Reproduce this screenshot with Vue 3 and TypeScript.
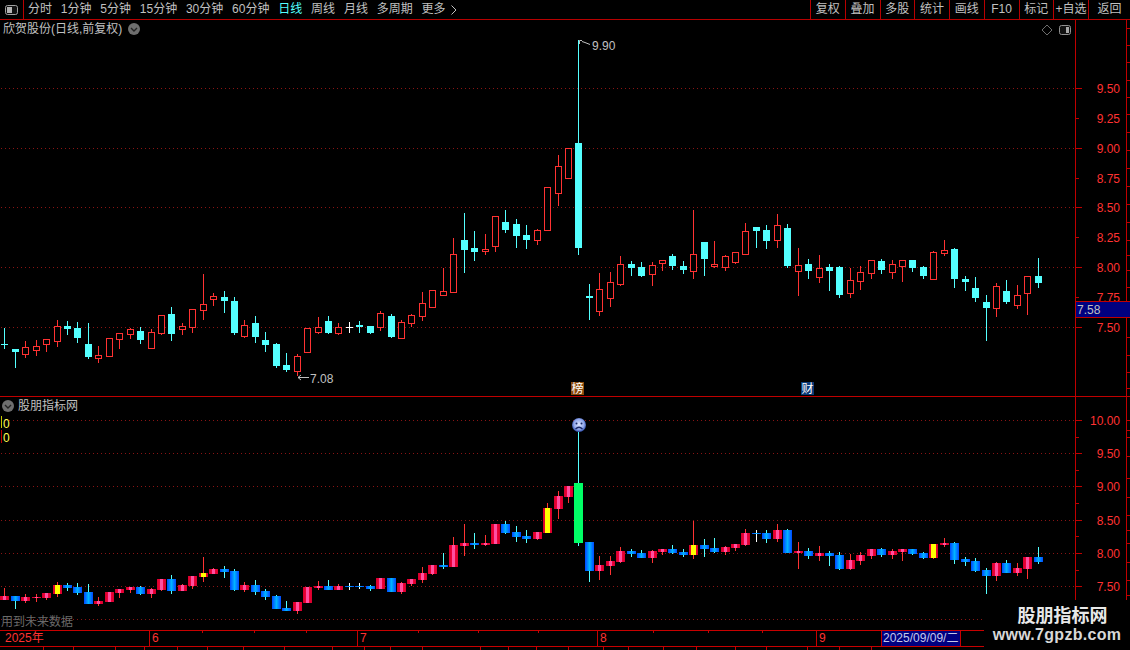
<script setup lang="ts">
interface Candle { k: string; hi: number; top: number; bot: number; lo: number; x: number }

const leftTools = ['分时', '1分钟', '5分钟', '15分钟', '30分钟', '60分钟', '日线', '周线', '月线', '多周期', '更多']
const rightTools = ['复权', '叠加', '多股', '统计', '画线', 'F10', '标记', '+自选', '返回']

const xOf = (i: number) => 4 + Math.ceil(i * 10.4375 - 0.1)

// rows are measured from zoomed crops: value = (pixel - base) * 3
const seg = (base: number, rows: string) =>
  rows.split(';').map((r) => {
    const [k, a, b, c, d] = r.trim().split(' ')
    const y = (v: string) => Math.round(base + Number(v) / 3)
    return { k, hi: y(a), top: y(b), bot: y(c), lo: y(d) }
  })

const build = (parts: ReturnType<typeof seg>[]): Candle[] =>
  parts.flat().map((c, i) => ({ ...c, x: xOf(i) }))

const mainCandles = build([
  seg(260, 'c 203 252 255 267;c 267 267 276 324;r 243 262 281 294;r 240 259 269 288;r 238 238 251 276;r 180 199 242 261;c 183 198 207 225;c 186 204 234 249;c 189 252 291 297;r 258 286 293 309;r 235 235 287 287;r 219 220 236 267;r 204 208 221 237;c 201 213 240 252;r 208 217 263 267;r 166 166 218 225;c 141 162 222 243;r 189 199 206 225;r 148 148 201 219;r 42 133 149 180;r 99 109 116 138;c 93 111 123 159;c 111 123 219 225;r 180 196 227 234;c 168 189 231 249;c 216 240 255 276;c 249 252 318 324;c 279 315 330 336;r 282 289 332 348;r 205 205 275 279;r 171 202 215 222'),
  seg(200, 'c 348 363 399 402;r 370 381 399 405;w 366 381 384 399;c 363 375 381 399;c 378 378 399 402;r 334 339 381 393;c 342 348 411 414;r 360 366 414 417;r 342 346 368 381;r 276 310 347 362;r 270 270 320 324;r 205 274 285 288;r 114 162 276 276;c 39 120 150 219;c 93 144 156 183;r 102 147 153 165;r 48 48 138 156;c 30 66 90 99;c 57 72 108 144;c 75 105 120 147;r 87 90 120 135;r -39 -39 90 90;r -135 -102 -21 18;r -156 -156 -66 -66;c -480 -171 144 165;c 252 288 294 360;r 219 267 332 348;r 216 247 293 321;r 168 192 252 258;c 183 192 204 228;c 186 201 228 231'),
  seg(200, 'r 186 195 221 258;r 180 181 188 213;c 162 168 198 210;c 183 198 210 222;r 30 162 213 237;c 126 126 177 228;r 123 192 198 204;r 165 168 201 213;r 156 156 186 192;r 69 93 162 165;c 81 81 93 144;c 75 90 123 147;r 42 75 120 144;c 72 84 198 204;r 144 195 213 288;c 177 192 213 237;r 165 204 231 249;c 192 201 213 273;c 198 201 285 294;r 204 240 279 294;r 198 216 243 270;r 180 180 219 237;c 177 183 210 222;r 180 192 216 237;r 180 180 198 246;c 180 180 204 216;c 198 201 228 237;r 153 156 237 237;r 120 150 159 168;c 144 147 237 264'),
  seg(220, 'c 168 177 186 213;c 171 204 234 246;c 225 246 264 363;r 189 198 265 291;c 180 213 246 252;r 195 226 254 267;r 168 168 218 285;c 114 168 189 204'),
])

const subCandles = build([
  seg(390, 'r 594 618 630 630;b 618 618 633 657;r 612 621 633 639;r 612 621 623 636;r 609 609 624 630;y 576 585 612 621;b 579 585 594 603;b 579 591 609 615;b 582 606 642 642;r 621 633 642 648;r 606 606 636 636;r 597 597 609 624;r 591 591 600 609;b 588 591 612 615;r 594 597 612 624;r 567 567 600 603;b 555 567 603 612;r 582 585 603 603;r 558 558 588 597;y 501 549 561 576;r 534 537 552 552;b 528 537 546 564;b 537 543 600 603;r 576 585 600 606;b 570 585 606 615;b 597 603 621 630;b 615 618 657 657;b 633 654 663 663;r 636 636 663 672;r 591 591 639 639;r 573 588 594 600'),
  seg(400, 'b 540 558 570 570;r 552 558 570 570;w 549 558 561 570;w 549 558 561 567;b 555 558 567 573;r 534 534 567 567;b 534 534 576 576;r 546 549 576 582;r 537 537 552 558;r 501 519 540 549;r 495 495 522 525;b 459 495 501 507;r 411 435 501 501;r 372 429 438 468;b 399 429 435 447;r 405 429 435 438;r 372 372 432 432;b 363 372 399 402;b 378 396 411 426;b 390 408 417 429;r 396 396 417 420;y 309 324 399 399;r 273 288 327 357;r 258 258 291 309;g 96 249 429 438;b 426 426 513 546;r 468 495 513 540;r 468 483 498 525;r 441 453 486 489;b 447 453 462 471'),
  seg(490, 'b 180 189 204 204;r 180 183 204 219;r 177 177 186 195;b 165 177 189 192;b 177 186 195 201;y 93 165 195 207;b 147 165 177 201;b 144 174 186 189;r 168 171 186 195;r 162 162 174 183;r 117 129 165 168;w 120 129 132 156;b 120 129 147 159;r 102 120 147 156;b 117 120 189 189;r 156 183 189 237;b 174 183 198 207;r 168 189 198 213;b 183 189 198 228;b 186 195 237 240;r 192 210 237 240;r 186 195 213 225;r 177 177 198 207;b 174 177 195 201;r 177 183 195 207;r 177 177 186 213;b 177 177 192 195;b 186 189 204 207;y 162 162 204 207;r 144 159 165 171;b 156 159 210 222'),
  seg(400, 'b 471 477 486 498;b 474 483 513 516;b 504 510 528 582;r 486 489 528 543;b 480 489 519 519;r 489 504 519 528;r 471 471 507 537;b 441 471 486 492'),
])

const mainGrid = [88, 148, 207, 267, 327]
const subGrid = [420, 453, 486, 520, 553, 586, 619]
const mainLabels = [
  ['9.50', 88], ['9.25', 118], ['9.00', 148], ['8.75', 178], ['8.50', 207],
  ['8.25', 237], ['8.00', 267], ['7.75', 297], ['7.50', 327],
] as const
const subLabels = [
  ['10.00', 420], ['9.50', 453], ['9.00', 486], ['8.50', 520], ['8.00', 553], ['7.50', 586],
] as const
const subMinor = [437, 470, 503, 536, 570, 603]
const farTicksMain = [28, 45, 62, 80, 97, 114, 132, 150, 168, 186, 204, 222, 240, 255, 270, 287, 337, 355, 372, 388]
const farTicksSub = [420, 430, 437, 456, 478, 497, 515, 530, 543, 562, 580, 595]

const dateCells = [
  { w: 150, t: '2025年' }, { w: 208, t: '6' }, { w: 240, t: '7' }, { w: 219, t: '8' }, { w: 65, t: '9' },
]
const dateTicks = [202, 254, 306, 418, 478, 538, 653, 708, 762]

const tabEdges = [43, 73, 115, 144, 177, 207, 243, 284, 332, 364, 390, 422, 480, 508, 536, 568, 603, 628, 663, 696, 735, 766, 807, 839, 871]
const tabWidths = tabEdges.map((e, i) => e - (i ? tabEdges[i - 1] : -1))
</script>

<template>
  <div class="screen">
    <header class="toolbar">
      <div class="panel-btn">
        <svg width="13" height="10" viewBox="0 0 13 10">
          <rect x="0.5" y="0.5" width="12" height="9" rx="2" fill="#111" stroke="#a0a0a0" />
          <rect x="2" y="2" width="5" height="6" fill="#b4b4b4" />
        </svg>
      </div>
      <nav class="left-tools">
        <span v-for="t in leftTools" :key="t" class="tool" :class="{ active: t === '日线' }">{{ t }}</span>
        <svg class="more-arrow" width="6" height="10" viewBox="0 0 6 10">
          <path d="M0.5 0.5 L5 5 L0.5 9.5" fill="none" stroke="#c0c0c0" />
        </svg>
      </nav>
      <nav class="right-tools">
        <span v-for="t in rightTools" :key="t" class="rtool">{{ t }}</span>
      </nav>
    </header>

    <section class="pane pane-main">
      <svg class="chart" width="1130" height="376" viewBox="0 20 1130 376">
        <g class="grid">
          <line v-for="y in mainGrid" :key="y" x1="1" :y1="y + 0.5" x2="1075" :y2="y + 0.5" />
        </g>
        <g v-for="c in mainCandles" :key="c.x" shape-rendering="crispEdges">
          <template v-if="c.k === 'r'">
            <rect :x="c.x" :y="c.hi" width="1" :height="Math.max(c.top - c.hi, 0)" fill="#ff3232" />
            <rect :x="c.x" :y="c.bot" width="1" :height="Math.max(c.lo - c.bot, 0)" fill="#ff3232" />
            <rect :x="c.x - 2.5" :y="c.top + 0.5" width="6" :height="Math.max(c.bot - c.top, 1)" fill="#000" stroke="#ff3232" />
          </template>
          <template v-else>
            <rect :x="c.x" :y="c.hi" width="1" :height="c.lo - c.hi" :fill="c.k === 'w' ? '#fff' : '#54ffff'" />
            <rect :x="c.x - 3" :y="c.top" width="7" :height="Math.max(c.bot - c.top, 1)" :fill="c.k === 'w' ? '#fff' : '#54ffff'" />
          </template>
        </g>
        <g shape-rendering="crispEdges">
          <rect x="1075" y="20" width="1" height="376" fill="#c00000" />
          <rect x="1126" y="20" width="1" height="376" fill="#c00000" />
          <rect v-for="(l, i) in mainLabels" :key="l[0]" x="1076" :y="l[1]" :width="i % 2 ? 3 : 6" height="1" fill="#c00000" />
          <rect v-for="y in farTicksMain" :key="y" x="1127" :y="y" width="3" height="1" fill="#c00000" />
        </g>
        <text v-for="l in mainLabels" :key="l[0]" class="num axis" x="1120" :y="l[1] + 5" text-anchor="end">{{ l[0] }}</text>

        <path d="M579.5 44 V40.5 H582 M582 41.5 L585 42.5 L590 44.5" fill="none" stroke="#c0c0c0" />
        <text class="num note" x="592" y="50">9.90</text>
        <path d="M298 377.5 H309 M298 377.5 L301 375 M298 377.5 L301 380" fill="none" stroke="#c0c0c0" />
        <text class="num note" x="310" y="383">7.08</text>

        <rect x="571" y="382" width="13" height="13" fill="#8a4a0c" />
        <text class="tag" x="577.5" y="393" text-anchor="middle">榜</text>
        <rect x="801" y="382" width="13" height="13" fill="#0a3a78" />
        <text class="tag" x="807.5" y="393" text-anchor="middle">财</text>

        <rect x="1075.5" y="301.5" width="55" height="16" fill="#000080" stroke="#c00000" />
        <text class="num price" x="1077" y="314">7.58</text>
      </svg>

      <div class="title title-main">
        <span>欣贺股份(日线,前复权)</span>
        <svg width="12" height="12" viewBox="0 0 12 12">
          <circle cx="6" cy="6" r="6" fill="#6e6e6e" />
          <path d="M3 5 L6 8 L9 5" fill="none" stroke="#222" stroke-width="1.4" />
        </svg>
      </div>
      <div class="pane-icons">
        <svg width="12" height="12" viewBox="0 0 12 12">
          <path d="M6 1 L11 6 L6 11 L1 6 Z" fill="none" stroke="#6e6e6e" />
        </svg>
        <svg width="12" height="10" viewBox="0 0 12 10">
          <rect x="0.5" y="0.5" width="11" height="9" rx="2" fill="#111" stroke="#909090" />
          <rect x="7" y="2" width="3" height="6" fill="#a8a8a8" />
        </svg>
      </div>
    </section>

    <section class="pane pane-sub">
      <svg class="chart" width="1130" height="233" viewBox="0 397 1130 233">
        <defs>
          <linearGradient id="candleRed">
            <stop offset="0" stop-color="#d4002a" />
            <stop offset="0.3" stop-color="#ee0038" />
            <stop offset="0.36" stop-color="#ff4fa0" />
            <stop offset="0.64" stop-color="#ff4fa0" />
            <stop offset="0.7" stop-color="#ee0038" />
            <stop offset="1" stop-color="#d4002a" />
          </linearGradient>
          <linearGradient id="candleBlue">
            <stop offset="0" stop-color="#0046ff" />
            <stop offset="0.3" stop-color="#0088ff" />
            <stop offset="0.5" stop-color="#00b4ff" />
            <stop offset="0.7" stop-color="#0088ff" />
            <stop offset="1" stop-color="#0046ff" />
          </linearGradient>
          <linearGradient id="candleYellow">
            <stop offset="0" stop-color="#d4002a" />
            <stop offset="0.22" stop-color="#e80030" />
            <stop offset="0.23" stop-color="#ffff00" />
            <stop offset="0.77" stop-color="#ffff00" />
            <stop offset="0.78" stop-color="#e80030" />
            <stop offset="1" stop-color="#d4002a" />
          </linearGradient>
          <radialGradient id="faceFill" cx="0.5" cy="0.45" r="0.55">
            <stop offset="0" stop-color="#dfe6ff" />
            <stop offset="0.65" stop-color="#92a8ec" />
            <stop offset="1" stop-color="#2c4aa8" />
          </radialGradient>
        </defs>
        <g class="grid">
          <line v-for="y in subGrid" :key="y" x1="1" :y1="y + 0.5" x2="1075" :y2="y + 0.5" />
        </g>
        <g v-for="c in subCandles" :key="c.x" shape-rendering="crispEdges">
          <rect :x="c.x" :y="c.hi" width="1" :height="c.lo - c.hi"
            :fill="c.k === 'r' || c.k === 'y' ? '#ff3232' : c.k === 'w' ? '#fff' : '#54ffff'" />
          <rect :x="c.x - 4" :y="c.top" width="9" :height="Math.max(c.bot - c.top, 1)"
            :fill="c.k === 'g' ? '#00ff66' : c.k === 'y' ? 'url(#candleYellow)' : c.k === 'r' ? 'url(#candleRed)' : 'url(#candleBlue)'" />
        </g>
        <g shape-rendering="crispEdges">
          <rect x="1075" y="397" width="1" height="233" fill="#c00000" />
          <rect x="1126" y="397" width="1" height="233" fill="#c00000" />
          <rect v-for="l in subLabels" :key="l[0]" x="1076" :y="l[1]" width="6" height="1" fill="#c00000" />
          <rect v-for="y in subMinor" :key="y" x="1076" :y="y" width="3" height="1" fill="#c00000" />
          <rect v-for="y in farTicksSub" :key="y" x="1127" :y="y" width="3" height="1" fill="#c00000" />
          <rect x="1" y="416" width="1" height="12" fill="#c8c800" />
          <rect x="1" y="430" width="1" height="13" fill="#c00000" />
        </g>
        <text v-for="l in subLabels" :key="l[0]" class="num axis" x="1120" :y="l[1] + 5" text-anchor="end">{{ l[0] }}</text>
        <text class="num zero" x="3" y="428">0</text>
        <text class="num zero" x="3" y="442">0</text>

        <circle cx="579" cy="425" r="7" fill="url(#faceFill)" />
        <circle cx="576.5" cy="423.5" r="1" fill="#182868" />
        <circle cx="581.5" cy="423.5" r="1" fill="#182868" />
        <path d="M575.5 429 Q579 425.5 582.5 429" fill="none" stroke="#182868" stroke-width="1.2" />

        <text class="hint" x="1" y="626">用到未来数据</text>
      </svg>
      <div class="title title-sub">
        <svg width="12" height="12" viewBox="0 0 12 12">
          <circle cx="6" cy="6" r="6" fill="#6e6e6e" />
          <path d="M3 5 L6 8 L9 5" fill="none" stroke="#222" stroke-width="1.4" />
        </svg>
        <span>股朋指标网</span>
      </div>
    </section>

    <div class="date-axis">
      <span v-for="d in dateCells" :key="d.t" class="date-cell" :style="{ width: d.w + 'px' }">{{ d.t }}</span>
      <span class="date-now">2025/09/09/二</span>
      <i v-for="x in dateTicks" :key="x" class="date-tick" :style="{ left: x + 'px' }"></i>
    </div>

    <div class="tabs">
      <span v-for="(w, i) in tabWidths" :key="i" class="tab" :style="{ width: w + 'px' }"></span>
    </div>

    <aside class="watermark">
      <div class="wm-name">股朋指标网</div>
      <div class="wm-url">www.7gpzb.com</div>
    </aside>
  </div>
</template>

<style>
html, body { background: #000; }
</style>

<style scoped>
.screen {
  position: relative;
  width: 1130px;
  height: 650px;
  overflow: hidden;
  background: #000;
  color: #c0c0c0;
  font-family: "Liberation Sans", "Noto Sans CJK SC", sans-serif;
  font-size: 12px;
}
.toolbar {
  display: flex;
  height: 19px;
  border-bottom: 1px solid #b80000;
  line-height: 19px;
}
.panel-btn {
  display: flex;
  align-items: center;
  justify-content: center;
  width: 23px;
  border-right: 1px solid #b80000;
}
.left-tools {
  display: flex;
  align-items: center;
  gap: 8.8px;
  padding-left: 4px;
}
.tool { white-space: nowrap; }
.tool.active { color: #54ffff; }
.more-arrow { margin-left: -3px; }
.right-tools {
  display: flex;
  margin-left: auto;
  width: 320px;
}
.rtool {
  flex: 1 1 35px;
  border-left: 1px solid #b80000;
  text-align: center;
  white-space: nowrap;
}
.rtool:last-child { flex: 0 0 41px; }
.pane {
  position: relative;
}
.pane-main {
  height: 376px;
  border-bottom: 1px solid #c00000;
}
.pane-sub {
  height: 233px;
}
.chart { display: block; }
.grid line {
  stroke: #8a1414;
  stroke-width: 1;
  stroke-dasharray: 1 3;
}
.num { font-family: "Liberation Sans", sans-serif; font-size: 12px; }
.axis { fill: #ff3232; }
.note { fill: #c0c0c0; }
.price { fill: #c0c0c0; }
.zero { fill: #ffff54; }
.tag { fill: #fff; font-size: 12px; font-family: "Noto Sans CJK SC", sans-serif; }
.hint { fill: #6a6a6a; font-size: 12px; font-family: "Noto Sans CJK SC", sans-serif; }
.title {
  position: absolute;
  display: flex;
  align-items: center;
  white-space: nowrap;
  line-height: 14px;
}
.title-main { left: 3px; top: 2px; gap: 6px; }
.title-sub { left: 2px; top: 2px; gap: 4px; }
.pane-icons {
  position: absolute;
  top: 4px;
  left: 1041px;
  display: flex;
  align-items: center;
  gap: 6px;
}
.date-axis {
  position: relative;
  display: flex;
  height: 15px;
  border-top: 1px solid #c80000;
  line-height: 15px;
  color: #ff3232;
}
.date-cell {
  box-sizing: border-box;
  padding-left: 2px;
  border-right: 1px solid #c80000;
}
.date-cell:first-child { padding-left: 5px; }
.date-now {
  box-sizing: border-box;
  width: 79px;
  padding-left: 1px;
  background: #000080;
  border-right: 1px solid #c80000;
  color: #c4c8e8;
  white-space: nowrap;
  overflow: hidden;
}
.date-tick {
  position: absolute;
  top: 0;
  width: 1px;
  height: 2px;
  background: #c80000;
}
.tabs {
  display: flex;
  height: 3px;
  border-top: 1px solid #c80000;
  overflow: hidden;
}
.tab {
  box-sizing: border-box;
  flex: none;
  height: 3px;
  border-right: 1px solid #c80000;
}
.watermark {
  position: absolute;
  right: 0;
  bottom: 0;
  width: 146px;
  height: 50px;
  background: #000;
  text-align: center;
}
.wm-name {
  margin-top: 2px;
  height: 24px;
  padding-left: 11px;
  font-family: "Noto Sans CJK SC", sans-serif;
  font-size: 18px;
  font-weight: 700;
  line-height: 24px;
  color: #e8e8e8;
}
.wm-url {
  font-size: 16px;
  font-weight: 700;
  letter-spacing: 0.3px;
  line-height: 18px;
  color: #d8d8d8;
  white-space: nowrap;
}
</style>
